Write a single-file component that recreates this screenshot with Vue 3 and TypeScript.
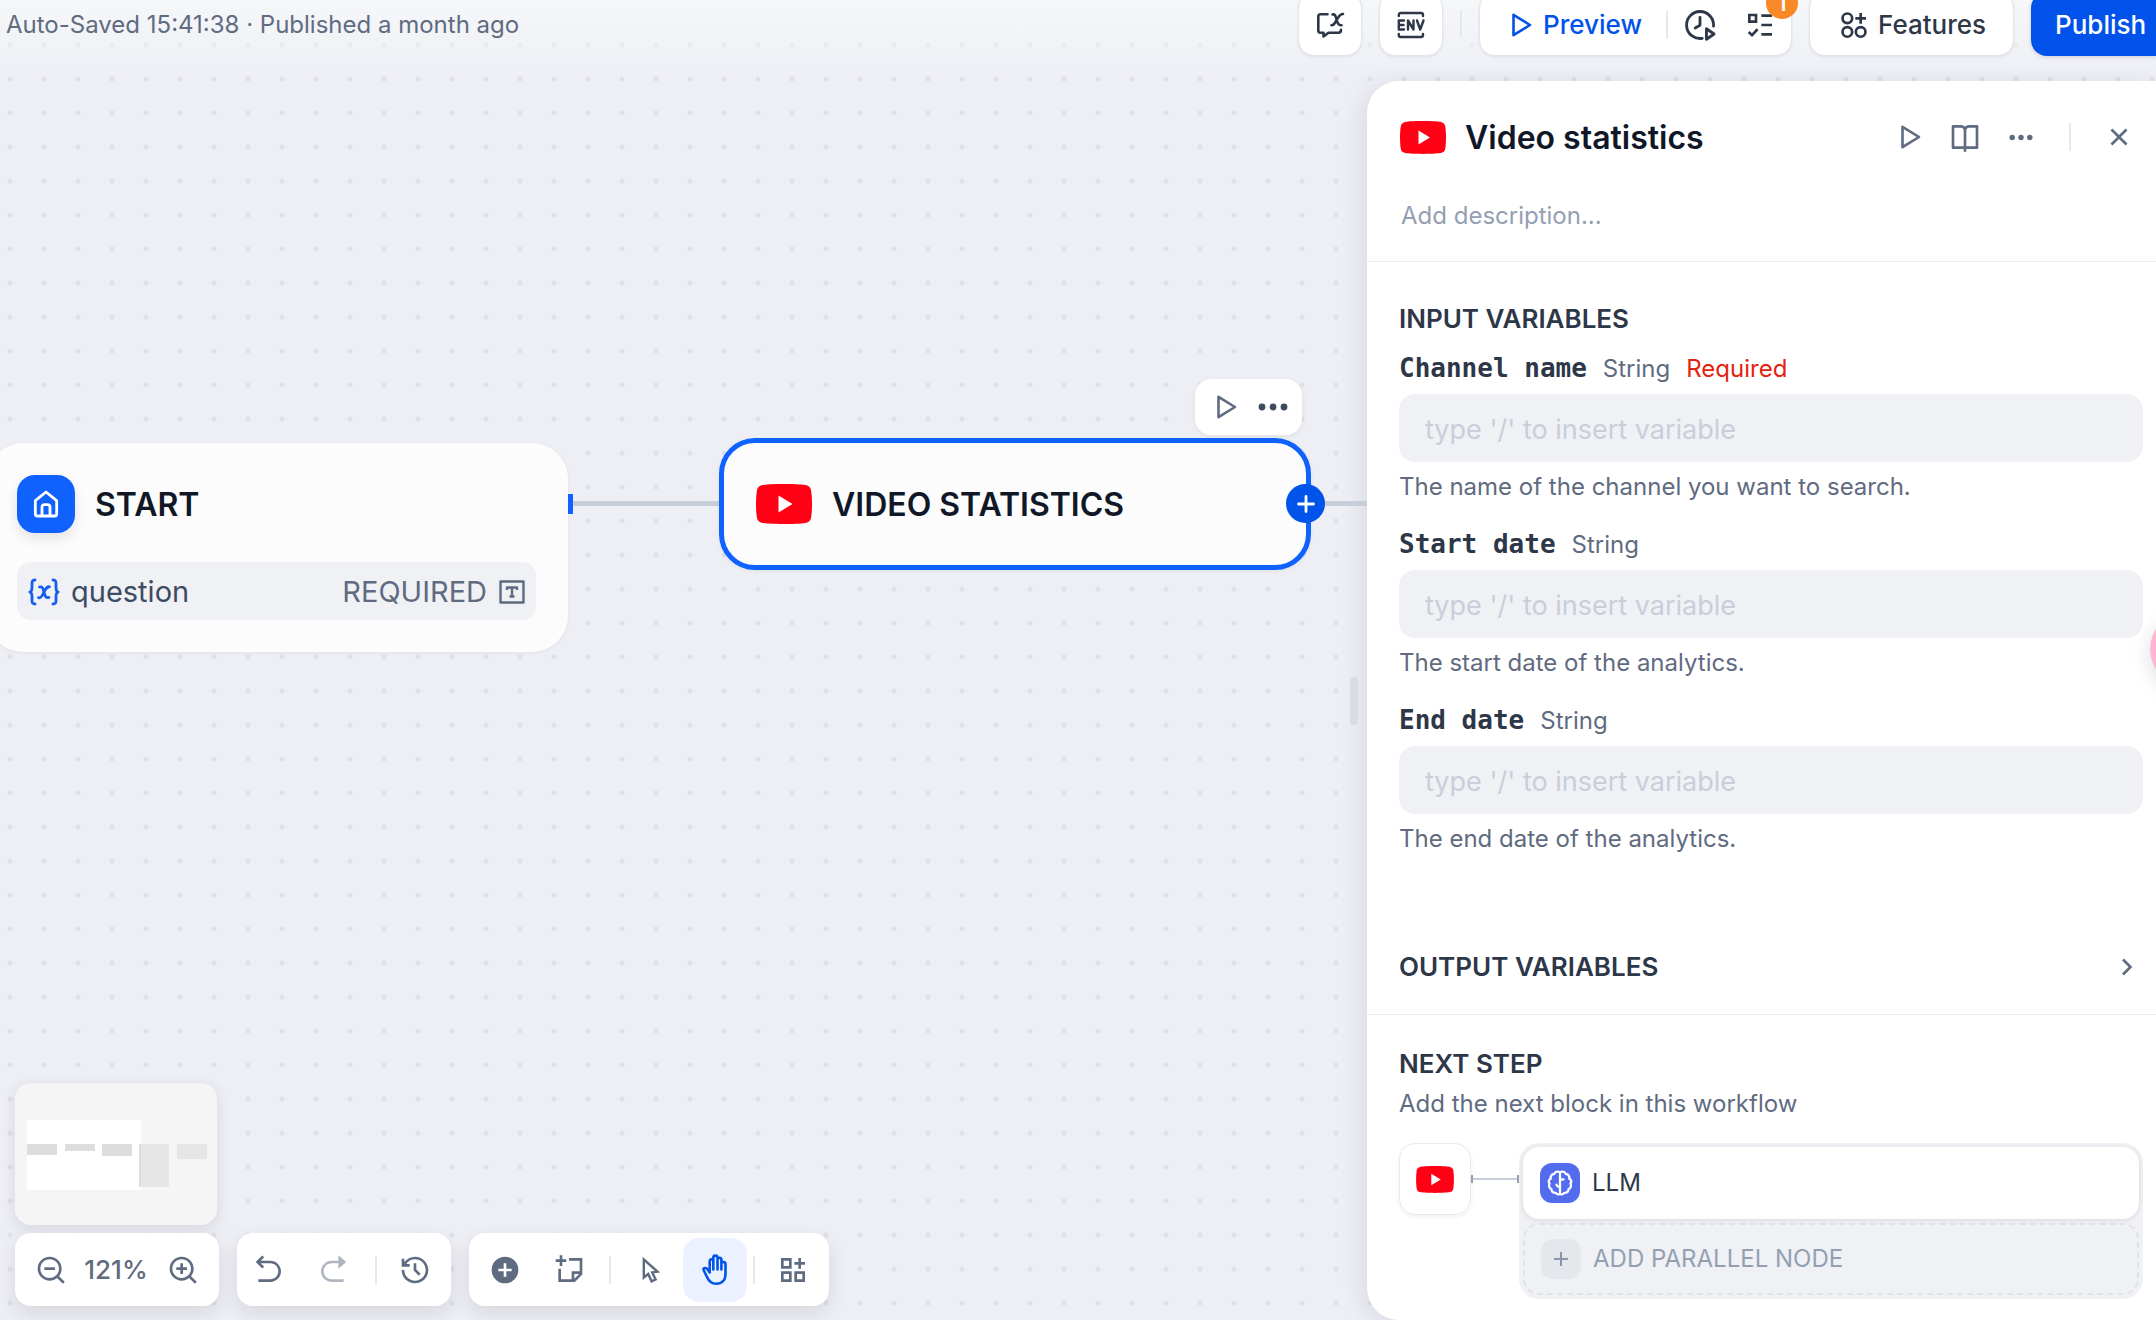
<script setup lang="ts">
import { ref } from 'vue'

interface Field {
  id: string
  name: string
  type: string
  required: boolean
  help: string
  value: string
}

const fields = ref<Field[]>([
  { id: 'channel-name', name: 'Channel name', type: 'String', required: true, help: 'The name of the channel you want to search.', value: '' },
  { id: 'start-date', name: 'Start date', type: 'String', required: false, help: 'The start date of the analytics.', value: '' },
  { id: 'end-date', name: 'End date', type: 'String', required: false, help: 'The end date of the analytics.', value: '' },
])
const description = ref('')
</script>

<template>
  <div class="app">
    <svg class="defs" width="0" height="0" aria-hidden="true">
      <symbol id="i-play" viewBox="0 0 20 24">
        <path d="M1.5 1.8V22.2L18 12Z" fill="none" stroke="currentColor" stroke-width="2.6" stroke-linejoin="round" />
      </symbol>
      <symbol id="i-youtube" viewBox="0 0 56 40">
        <path d="M28 0C40 0 48 .6 50.500 1.300C53 2 54.500 3.600 55 6C55.700 10 56 15 56 20C56 25 55.700 30 55 34C54.500 36.400 53 38 50.500 38.700C48 39.400 40 40 28 40C16 40 8 39.400 5.500 38.700C3 38 1.500 36.400 1 34C.3 30 0 25 0 20C0 15 .3 10 1 6C1.500 3.600 3 2 5.500 1.300C8 .6 16 0 28 0Z" fill="#ff0014" />
        <path d="M22.500 11.500V28.500L36.500 20Z" fill="#fff" />
      </symbol>
      <symbol id="i-more" viewBox="0 0 30 8">
        <circle cx="4" cy="4" r="3.400" /><circle cx="15" cy="4" r="3.400" /><circle cx="26" cy="4" r="3.400" />
      </symbol>
      <symbol id="i-lens" viewBox="0 0 24 24">
        <path d="M18.031 16.617L22.314 20.900L20.900 22.314L16.617 18.031C15.077 19.263 13.124 20 11 20C6.032 20 2 15.968 2 11C2 6.032 6.032 2 11 2C15.968 2 20 6.032 20 11C20 13.124 19.263 15.077 18.031 16.617ZM16.025 15.875C17.248 14.615 18 12.896 18 11C18 7.133 14.868 4 11 4C7.133 4 4 7.133 4 11C4 14.868 7.133 18 11 18C12.896 18 14.615 17.248 15.875 16.025Z" />
      </symbol>
    </svg>

    <header class="topbar">
      <p class="status">Auto-Saved 15:41:38 · Published a month ago</p>
      <div class="actions">
        <button class="btn square" aria-label="Conversation variables">
          <svg class="i32" viewBox="0 0 32 32" fill="none" stroke="currentColor" stroke-width="2.600" stroke-linecap="round" stroke-linejoin="round">
            <path d="M13.500 5.300H6.500Q4.300 5.300 4.300 7.500V21.500Q4.300 23.800 6.500 23.800H9.500V27.500L14.500 23.800H24.500Q27 23.800 27 20.800" />
            <path d="M18.500 5.500C21 5 21.500 6.500 22.500 10.500S24.500 16.800 27.500 16.200M29 5C26 4.500 25 7.500 22.800 10.800S20 16.600 17.500 16.200" />
          </svg>
        </button>
        <button class="btn square" aria-label="Environment variables">
          <svg class="i32" viewBox="0 0 32 32" fill="none" stroke="currentColor" stroke-width="2.400" stroke-linecap="round" stroke-linejoin="round">
            <path d="M3.800 7V6Q3.800 4 5.800 4H26Q28 4 28 6V7M3.800 25V26Q3.800 28 5.800 28H26Q28 28 28 26V25" />
            <path d="M9 11.500H3.800V20.500H9M3.800 16H8.500M13 20.500V11.500L18.500 20.500V11.500M22 11.500L25.200 20.500L28.500 11.500" />
          </svg>
        </button>
        <span class="sep"></span>
        <div class="btn run">
          <button class="preview"><svg class="play" aria-hidden="true"><use href="#i-play" /></svg>Preview</button>
          <span class="sep"></span>
          <button class="clock" aria-label="Run history">
            <svg width="36" height="36" viewBox="0 0 24 24" fill="none" stroke="currentColor" stroke-width="1.900" stroke-linecap="round" stroke-linejoin="round">
              <path d="M13.500 20.900A9 9 0 1 1 21 12.800M12 7V12.200L8.800 14" />
              <path d="M16.300 14.500V21.500L21.400 18Z" />
            </svg>
          </button>
          <button class="check" aria-label="Checklist">
            <svg class="i32" viewBox="0 0 24 24" fill="none" stroke="currentColor" stroke-width="2">
              <path d="M4 4.500H9V9.500H4ZM3.500 17.300L6 19.600L10.200 15.200M13 5H21M13 12H21M13 19H21" />
            </svg>
            <span class="badge">1</span>
          </button>
        </div>
        <button class="btn features">
          <svg class="i32" viewBox="0 0 24 24" fill="none" stroke="currentColor" stroke-width="2">
            <circle cx="7" cy="7" r="3.600" /><circle cx="7" cy="17.200" r="3.600" /><circle cx="17" cy="17.200" r="3.600" /><path d="M17 3V11M13 7H21" />
          </svg>
          Features
        </button>
        <button class="publish">Publish</button>
      </div>
    </header>

    <main class="body">
      <section class="canvas">
        <span class="edge first"></span>
        <span class="edge second"></span>

        <article class="node start">
          <span class="port"></span>
          <header class="node-head">
            <span class="home">
              <svg width="32" height="32" viewBox="0 0 24 24" fill="none" stroke="#fff" stroke-width="2.100" stroke-linejoin="round">
                <path d="M4 9.500L12 3L20 9.500V19.500Q20 21 18.500 21H5.500Q4 21 4 19.500Z" /><path d="M9 21V14.500Q9 12.500 11 12.500H13Q15 12.500 15 14.500V21" />
              </svg>
            </span>
            <h2>START</h2>
          </header>
          <div class="variable">
            <svg width="32" height="28" viewBox="0 0 32 28" fill="none" stroke="#155eef" stroke-width="2.800" stroke-linecap="round" stroke-linejoin="round">
              <path d="M7 2C4 2 4 3.500 4 6V9.500Q4 13.500 1.800 14Q4 14.500 4 18.500V22C4 24.500 4 26 7 26M25 2C28 2 28 3.500 28 6V9.500Q28 13.500 30.200 14Q28 14.500 28 18.500V22C28 24.500 28 26 25 26" />
              <path d="M11.500 9C14.500 8.200 15 10.500 16 14S17.500 20.500 21 19.500M21.500 8.800C18.500 8.200 17.500 11 16 14S13.500 20.600 10.500 19.700" />
            </svg>
            <span class="var-name">question</span>
            <span class="var-req">REQUIRED</span>
            <svg width="26" height="24" viewBox="0 0 26 24" fill="none" stroke="#5f6b80" stroke-width="2.400">
              <path d="M1.500 1.500H24.500V22.500H1.500ZM8 10V7.500H18V10M13 7.500V16.500M10.500 16.500H15.500" stroke-linejoin="round" />
            </svg>
          </div>
        </article>

        <div class="node-tools">
          <button aria-label="Run this step"><svg class="play" aria-hidden="true"><use href="#i-play" /></svg></button>
          <button class="dark" aria-label="More"><svg width="30" height="8"><use href="#i-more" /></svg></button>
        </div>

        <article class="node video">
          <svg width="56" height="40" aria-hidden="true"><use href="#i-youtube" /></svg>
          <h2>VIDEO STATISTICS</h2>
          <button class="add" aria-label="Add node">
            <svg width="18" height="18" viewBox="0 0 18 18" stroke="#fff" stroke-width="2.800" stroke-linecap="round"><path d="M9 1.500V16.500M1.500 9H16.500" /></svg>
          </button>
        </article>

        <span class="resizer"></span>

        <div class="dock">
          <svg class="minimap" width="202" height="142" viewBox="0 0 202 142" aria-label="Minimap">
            <rect width="202" height="142" fill="#f5f5f5" />
            <rect x="12" y="37" width="114" height="70" fill="#fff" />
            <g fill="#ddd"><rect x="12" y="61" width="30" height="11" /><rect x="50" y="61" width="30" height="7" /><rect x="87" y="61" width="30" height="12" /><rect x="124" y="61" width="2" height="43" /></g>
            <g fill="#e6e6e6"><rect x="126" y="61" width="28" height="43" /><rect x="162" y="61" width="30" height="15" /></g>
          </svg>
          <div class="bars">
            <div class="bar zoom">
              <button aria-label="Zoom out"><svg class="i32" viewBox="0 0 24 24"><use href="#i-lens" /><path d="M7 10H15V12H7Z" /></svg></button>
              <span class="percent">121%</span>
              <button aria-label="Zoom in"><svg class="i32" viewBox="0 0 24 24"><use href="#i-lens" /><path d="M10 10V7H12V10H15V12H12V15H10V12H7V10Z" /></svg></button>
            </div>
            <div class="bar history">
              <button aria-label="Undo"><svg class="i32" viewBox="0 0 24 24"><path d="M5.828 7L8.364 9.535L6.950 10.950L2 6L6.950 1.050L8.364 2.464L5.828 5H13C17.418 5 21 8.582 21 13C21 17.418 17.418 21 13 21H4V19H13C16.314 19 19 16.314 19 13C19 9.686 16.314 7 13 7Z" /></svg></button>
              <button class="off" aria-label="Redo"><svg class="i32" viewBox="0 0 24 24"><path d="M16 7H11C7.686 7 5 9.686 5 13C5 16.314 7.686 19 11 19H20V21H11C6.582 21 3 17.418 3 13C3 8.582 6.582 5 11 5H16V1L22 6L16 11Z" /></svg></button>
              <span class="sep"></span>
              <button aria-label="Change history"><svg class="i32" viewBox="0 0 24 24"><path d="M12 2C17.523 2 22 6.477 22 12C22 17.523 17.523 22 12 22C6.477 22 2 17.523 2 12H4C4 16.418 7.582 20 12 20C16.418 20 20 16.418 20 12C20 7.582 16.418 4 12 4C9.250 4 6.824 5.387 5.385 7.500H8V9.500H2V3.500H4V6C5.824 3.571 8.729 2 12 2ZM13 7V11.585L16.243 14.828L14.828 16.243L11 12.413V7Z" /></svg></button>
            </div>
            <div class="bar tools">
              <button aria-label="Add block"><svg class="i32" viewBox="0 0 24 24"><path fill-rule="evenodd" d="M12 22A10 10 0 1 1 12 2A10 10 0 0 1 12 22ZM11 11H7V13H11V17H13V13H17V11H13V7H11Z" /></svg></button>
              <button aria-label="Add note"><svg class="i32" viewBox="0 0 24 24" fill="none" stroke="currentColor" stroke-width="2"><path d="M6 1V9M2 5H10M12 4H21V15L16 20H5V11M21 14H15V20" /></svg></button>
              <span class="sep"></span>
              <button aria-label="Pointer mode"><svg class="i32" viewBox="0 0 32 32" fill="none" stroke="currentColor" stroke-width="2.400" stroke-linejoin="miter"><path d="M8.800 5.500V23.500L13.200 20L16.600 27.300L20.600 25.500L17.200 18.400L22.500 17.600Z" /></svg></button>
              <button class="active" aria-label="Hand mode"><svg class="i32" viewBox="-1.5 0 32 32" fill="none" stroke="currentColor" stroke-width="2.600" stroke-linecap="round" stroke-linejoin="round"><path d="M9.200 18V7.400Q9.200 5.300 11 5.300T12.800 7.400V3.700Q12.800 1.600 14.900 1.600T17 3.700V5.500Q17 3.800 18.900 3.800T20.900 5.800V10Q20.900 8 22.900 8T25 10V20C25 26 21.500 29.800 15.800 29.800C10.500 29.800 8 26.500 6.500 23L3.300 16.500Q2.300 14.400 4.200 14Q6 13.700 7.200 15.500L9.200 18.500M12.800 7V15.500M17 4V15.500M20.900 6V15.500" /></svg></button>
              <span class="sep tight"></span>
              <button aria-label="Organize blocks"><svg class="i32" viewBox="0 0 24 24" fill="none" stroke="currentColor" stroke-width="2"><path d="M4 4H10V10H4ZM4 14H10V20H4ZM14 14H20V20H14ZM17 3V11M13 7H21" /></svg></button>
            </div>
          </div>
        </div>
      </section>

      <aside class="panel">
        <section class="panel-head">
          <div class="title-row">
            <svg width="46" height="33" aria-hidden="true"><use href="#i-youtube" /></svg>
            <h1>Video statistics</h1>
            <div class="title-tools">
              <button aria-label="Run this step"><svg class="play" aria-hidden="true"><use href="#i-play" /></svg></button>
              <button aria-label="Documentation"><svg class="i32" viewBox="0 0 24 24"><path d="M13 21V23H11V21H3C2.448 21 2 20.552 2 20V4C2 3.448 2.448 3 3 3H9C10.195 3 11.267 3.524 12 4.354C12.733 3.524 13.805 3 15 3H21C21.552 3 22 3.448 22 4V20C22 20.552 21.552 21 21 21ZM20 19V5H15C13.895 5 13 5.895 13 7V19ZM11 19V7C11 5.895 10.105 5 9 5H4V19Z" /></svg></button>
              <button aria-label="More"><svg width="24" height="7"><use href="#i-more" /></svg></button>
              <span class="sep"></span>
              <button aria-label="Close"><svg class="i32" viewBox="0 0 24 24"><path d="M12 10.587L16.950 5.637L18.364 7.051L13.414 12L18.364 16.950L16.950 18.365L12 13.415L7.050 18.365L5.636 16.950L10.586 12L5.636 7.051L7.050 5.637Z" /></svg></button>
            </div>
          </div>
          <input v-model="description" class="description" type="text" aria-label="Description" placeholder="Add description..." />
        </section>

        <section class="inputs">
          <h3>INPUT VARIABLES</h3>
          <div v-for="f in fields" :key="f.id" class="field">
            <div class="label-row">
              <label :for="f.id">{{ f.name }}</label>
              <span class="type">{{ f.type }}</span>
              <span v-if="f.required" class="required">Required</span>
            </div>
            <input :id="f.id" v-model="f.value" class="text" type="text" placeholder="type '/' to insert variable" />
            <p class="help">{{ f.help }}</p>
          </div>
          <button class="outputs">
            OUTPUT VARIABLES
            <svg width="12" height="18" viewBox="0 0 12 18" fill="none" stroke="#5f6b80" stroke-width="2.600"><path d="M2 1.500L9.500 9L2 16.500" /></svg>
          </button>
        </section>

        <section class="next">
          <h3>NEXT STEP</h3>
          <p class="help">Add the next block in this workflow</p>
          <div class="flow">
            <span class="source"><svg width="38" height="27" aria-hidden="true"><use href="#i-youtube" /></svg></span>
            <span class="link"></span>
            <div class="targets">
              <button class="target">
                <span class="brain">
                  <svg width="26" height="26" viewBox="0 0 26 26" fill="none" stroke="#fff" stroke-width="2.300" stroke-linecap="round" stroke-linejoin="round">
                    <path d="M13 2.200C10.500.8 7.800 1.800 7 4.200C4.200 4.300 3.200 6.800 3.700 8.800C1.300 10 1.200 12.200 2.600 13.500C1.400 15.800 2.300 18.200 4.300 19C4.700 22 6.500 23.200 8.800 22.800C10 24.600 11.800 24.600 13 23.800C14.200 24.600 16 24.600 17.200 22.800C19.500 23.200 21.300 22 21.700 19C23.700 18.200 24.600 15.800 23.400 13.500C24.800 12.200 24.700 10 22.300 8.800C22.800 6.800 21.800 4.300 19 4.200C18.200 1.800 15.500.8 13 2.200ZM13 2.500V23.500M13 9.500H16.500M13 17C11 17 10 16.500 9.500 14.800" />
                  </svg>
                </span>
                LLM
              </button>
              <button class="parallel">
                <span class="plus"><svg width="16" height="16" viewBox="0 0 16 16" stroke="#8a97aa" stroke-width="2"><path d="M8 1V15M1 8H15" /></svg></span>
                ADD PARALLEL NODE
              </button>
            </div>
          </div>
        </section>
      </aside>
    </main>
    <span class="bubble"></span>
  </div>
</template>

<style>
body {
  margin: 0;
}
</style>

<style scoped>
* {
  box-sizing: border-box;
}
.app {
  position: relative;
  display: flex;
  flex-direction: column;
  min-height: 100vh;
  overflow: hidden;
  background: radial-gradient(circle at center, #e0e1e5 0 2px, transparent 3px) -7px -6px / 34px 34px #eeeff5;
  color: #2d3748;
  font-family: Inter, "Liberation Sans", sans-serif;
  font-size: 24px;
  line-height: 32px;
}
.defs {
  position: absolute;
}
h1, h2, h3, p {
  margin: 0;
}
button {
  display: flex;
  align-items: center;
  justify-content: center;
  margin: 0;
  padding: 0;
  border: 0;
  background: none;
  color: inherit;
  font: inherit;
  cursor: pointer;
}
svg {
  flex: none;
  fill: currentColor;
}
svg[fill="none"] {
  fill: none;
}
.i32 {
  width: 32px;
  height: 32px;
}
.play {
  width: 20px;
  height: 24px;
}
.sep {
  flex: none;
  width: 2px;
  height: 28px;
  background: #e6e8ed;
}

/* top bar */
.topbar {
  display: flex;
  justify-content: space-between;
  height: 81px;
  background: linear-gradient(#f6f7f9, rgba(246, 247, 249, 0));
}
.status {
  padding: 9px 0 0 6px;
  color: #5f6b80;
}
.actions {
  display: flex;
  align-items: center;
  gap: 17px;
  height: 64px;
  margin-top: -8px;
  font-size: 26px;
  font-weight: 500;
}
.btn {
  display: flex;
  align-items: center;
  height: 64px;
  padding-top: 2px;
  border: 1px solid #e3e5ea;
  border-radius: 16px;
  background: #fff;
  box-shadow: 0 1px 3px rgba(16, 24, 40, 0.08);
}
.square {
  width: 64px;
}
.run {
  padding: 2px 15px 0 32px;
}
.preview {
  gap: 11px;
  margin-right: 24px;
  color: #0052ea;
}
.clock {
  margin: 0 26px 0 14px;
}
.check {
  position: relative;
}
.badge {
  position: absolute;
  left: 22px;
  bottom: 22px;
  width: 32px;
  height: 32px;
  border-radius: 50%;
  background: #f98826;
  color: #fff;
  font-size: 22px;
  font-weight: 600;
  line-height: 32px;
}
.features {
  gap: 8px;
  padding: 2px 27px 0 28px;
}
.publish {
  width: 125px;
  height: 64px;
  padding: 2px 0 0 24px;
  justify-content: flex-start;
  border-radius: 16px 0 0 16px;
  background: #0052ea;
  box-shadow: 0 1px 4px rgba(16, 24, 40, 0.16);
  color: #fff;
}

/* canvas */
.body {
  display: flex;
  flex: 1;
}
.canvas {
  position: relative;
  display: flex;
  flex: 1;
  flex-direction: column;
  justify-content: flex-end;
}
.node {
  position: absolute;
  border-radius: 36px;
  background: #fcfcfd;
  box-shadow: 0 1px 4px rgba(16, 24, 40, 0.06);
}
.node h2 {
  padding-top: 2px;
  color: #101828;
  font-size: 32px;
  font-weight: 600;
  line-height: 40px;
}
.start {
  top: 362px;
  left: -13px;
  width: 581px;
  padding: 32px 32px 32px 30px;
}
.node-head {
  display: flex;
  align-items: center;
  gap: 20px;
}
.home {
  display: grid;
  place-items: center;
  width: 58px;
  height: 58px;
  border-radius: 18px;
  background: #1062fe;
  box-shadow: 0 6px 12px rgba(16, 24, 40, 0.1);
}
.port {
  position: absolute;
  top: 51px;
  right: -5px;
  width: 5px;
  height: 20px;
  background: #1062fe;
}
.variable {
  display: flex;
  align-items: center;
  height: 58px;
  margin-top: 29px;
  padding: 1px 11px 0 11px;
  border-radius: 14px;
  background: #f0f1f5;
  font-size: 29px;
}
.var-name {
  margin-left: 11px;
  color: #3d4a5f;
}
.var-req {
  margin: 0 12px 0 auto;
  color: #5f6b80;
}
.video {
  top: 357px;
  left: 719px;
  display: flex;
  align-items: center;
  gap: 20px;
  width: 592px;
  height: 132px;
  padding-left: 32px;
  border: 5px solid #1062fe;
}
.add {
  position: absolute;
  top: 41px;
  right: -19px;
  width: 39px;
  height: 39px;
  border-radius: 50%;
  background: #0054ea;
}
.edge {
  position: absolute;
  top: 420px;
  height: 5px;
  background: #c8ced9;
}
.first {
  left: 573px;
  width: 148px;
}
.second {
  left: 1309px;
  right: 0;
}
.node-tools {
  position: absolute;
  top: 298px;
  left: 1195px;
  display: flex;
  align-items: center;
  gap: 21px;
  height: 56px;
  padding: 0 14px 0 22px;
  border-radius: 16px;
  background: #fff;
  box-shadow: 0 1px 5px rgba(16, 24, 40, 0.08);
  color: #5f6b80;
}
.dark {
  color: #3d4a5f;
}
.resizer {
  position: absolute;
  top: 596px;
  right: 9px;
  width: 8px;
  height: 48px;
  border-radius: 4px;
  background: #dadce2;
}

/* bottom dock */
.dock {
  padding: 0 0 14px 15px;
}
.minimap {
  display: block;
  margin-bottom: 8px;
  border-radius: 16px;
  box-shadow: 0 4px 16px rgba(16, 24, 40, 0.1);
}
.bars {
  display: flex;
  gap: 18px;
}
.bar {
  display: flex;
  align-items: center;
  height: 73px;
  border-radius: 16px;
  background: #fff;
  box-shadow: 0 8px 20px rgba(16, 24, 40, 0.1);
  color: #5f6b80;
}
.bar button {
  width: 64px;
  height: 64px;
  border-radius: 16px;
}
.zoom {
  justify-content: space-between;
  width: 204px;
  padding: 0 4px;
}
.percent {
  margin: 0 -6px 0 -8px;
  font-size: 26px;
  font-weight: 500;
}
.history {
  padding-right: 4px;
}
.bar .sep {
  margin: 0 8px;
}
.history .sep {
  margin: 0 6px 0 10px;
}
.bar .tight {
  margin: 0 6px;
}
.tools {
  padding: 0 4px;
}
.bar .off {
  color: #b0b6c1;
}
.bar .active {
  background: #ebf1fe;
  color: #0054ea;
}

/* node panel */
.panel {
  width: 789px;
  border-radius: 32px 0 0 32px;
  background: #fff;
  box-shadow: -4px 4px 24px rgba(16, 24, 40, 0.09);
}
.panel h3, .outputs {
  font-size: 26px;
  font-weight: 600;
  line-height: 32px;
}
.panel-head {
  padding: 32px 13px 26px 33px;
  border-bottom: 1px solid #eaecf0;
}
.title-row {
  display: flex;
  align-items: center;
  gap: 19px;
  height: 48px;
}
.title-row h1 {
  padding-top: 2px;
  color: #101828;
  font-size: 32px;
  font-weight: 600;
  line-height: 48px;
}
.title-tools {
  display: flex;
  align-items: center;
  gap: 28px;
  margin-left: auto;
  padding-right: 8px;
  color: #5f6b80;
}
.title-tools .sep {
  margin: 0 4px 0 8px;
}
.description {
  display: block;
  width: 100%;
  height: 40px;
  margin-top: 34px;
  padding: 0 1px;
  border: 0;
  background: none;
  font: inherit;
}
.description::placeholder {
  color: #94a0b2;
}
.inputs {
  padding: 41px 13px 31px 32px;
  border-bottom: 1px solid #eaecf0;
}
.inputs h3 {
  margin-bottom: 17px;
}
.field {
  margin-bottom: 25px;
}
.label-row {
  display: flex;
  align-items: baseline;
  gap: 16px;
  height: 32px;
}
.label-row label {
  font-family: "DejaVu Sans Mono", monospace;
  font-size: 26px;
  font-weight: 700;
}
.type, .help {
  color: #5f6b80;
}
.required {
  color: #e3230f;
}
.text {
  display: block;
  width: 100%;
  height: 68px;
  margin: 10px 0 9px;
  padding: 2px 26px 0;
  border: 0;
  border-radius: 16px;
  background: #f0f1f5;
  font: inherit;
  font-size: 27px;
}
.text::placeholder {
  color: #c8cfda;
}
.outputs {
  justify-content: space-between;
  width: 100%;
  margin-top: 96px;
  padding-right: 10px;
}
.next {
  padding: 33px 13px 19px 32px;
}
.next .help {
  margin-top: 8px;
}
.flow {
  display: flex;
  margin-top: 23px;
}
.source {
  display: grid;
  place-items: center;
  width: 72px;
  height: 72px;
  border: 1px solid #e8eaee;
  border-radius: 16px;
  box-shadow: 0 2px 5px rgba(16, 24, 40, 0.06);
}
.link {
  width: 48px;
  height: 8px;
  margin-top: 32px;
  border: solid #94a0b2;
  border-width: 0 2px;
  background: linear-gradient(#c8ced9, #c8ced9) center / 100% 2px no-repeat;
}
.targets {
  flex: 1;
  padding: 4px;
  border-radius: 20px;
  background: #f0f1f5;
}
.target, .parallel {
  justify-content: flex-start;
  gap: 12px;
  width: 100%;
  height: 72px;
  padding: 0 17px;
  border-radius: 16px;
}
.target {
  background: #fff;
  box-shadow: 0 1px 5px rgba(16, 24, 40, 0.1);
}
.parallel {
  margin-top: 4px;
  padding: 0 16px;
  border: 2px dashed #dfe2e7;
  color: #94a0b2;
}
.brain, .plus {
  display: grid;
  place-items: center;
  width: 40px;
  height: 40px;
  border-radius: 12px;
}
.brain {
  background: #536cee;
}
.plus {
  background: #e5e7ec;
}
.bubble {
  position: absolute;
  top: 613px;
  right: -66px;
  width: 72px;
  height: 72px;
  border-radius: 50%;
  background: #ffb6d2;
  box-shadow: 0 6px 20px rgba(16, 24, 40, 0.15);
}
</style>
